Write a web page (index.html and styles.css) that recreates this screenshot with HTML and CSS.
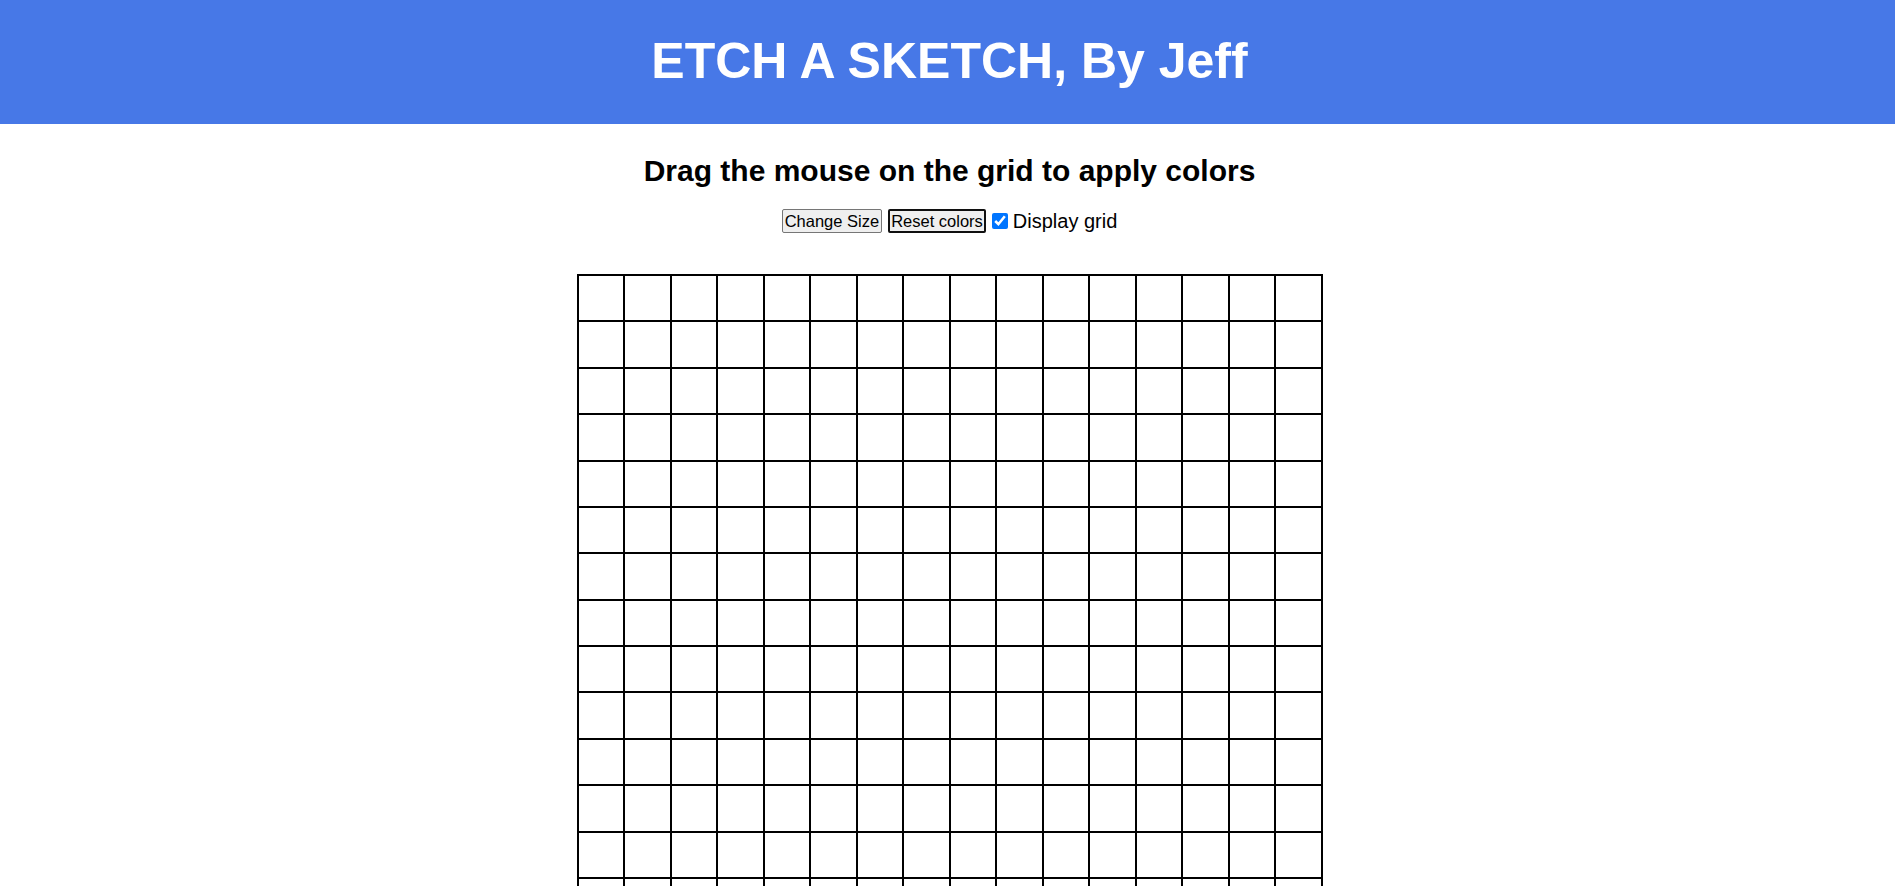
FILE: index.html
```html
<!DOCTYPE html>
<html lang="en">
<head>
<meta charset="utf-8">
<title>Etch a Sketch</title>
<link rel="stylesheet" href="styles.css">
</head>
<body>
<header class="top">
  <h1 class="title">ETCH A SKETCH, By Jeff</h1>
</header>
<main class="main">
  <h2 class="hint">Drag the mouse on the grid to apply colors</h2>
  <div class="controls">
    <button class="btn">Change Size</button>
    <button class="btn btn-focus">Reset colors</button>
    <label class="toggle"><input class="check" type="checkbox" checked> Display grid</label>
  </div>
  <div class="grid">
    <div class="cell"></div><div class="cell"></div><div class="cell"></div><div class="cell"></div><div class="cell"></div><div class="cell"></div><div class="cell"></div><div class="cell"></div><div class="cell"></div><div class="cell"></div><div class="cell"></div><div class="cell"></div><div class="cell"></div><div class="cell"></div><div class="cell"></div><div class="cell"></div>
    <div class="cell"></div><div class="cell"></div><div class="cell"></div><div class="cell"></div><div class="cell"></div><div class="cell"></div><div class="cell"></div><div class="cell"></div><div class="cell"></div><div class="cell"></div><div class="cell"></div><div class="cell"></div><div class="cell"></div><div class="cell"></div><div class="cell"></div><div class="cell"></div>
    <div class="cell"></div><div class="cell"></div><div class="cell"></div><div class="cell"></div><div class="cell"></div><div class="cell"></div><div class="cell"></div><div class="cell"></div><div class="cell"></div><div class="cell"></div><div class="cell"></div><div class="cell"></div><div class="cell"></div><div class="cell"></div><div class="cell"></div><div class="cell"></div>
    <div class="cell"></div><div class="cell"></div><div class="cell"></div><div class="cell"></div><div class="cell"></div><div class="cell"></div><div class="cell"></div><div class="cell"></div><div class="cell"></div><div class="cell"></div><div class="cell"></div><div class="cell"></div><div class="cell"></div><div class="cell"></div><div class="cell"></div><div class="cell"></div>
    <div class="cell"></div><div class="cell"></div><div class="cell"></div><div class="cell"></div><div class="cell"></div><div class="cell"></div><div class="cell"></div><div class="cell"></div><div class="cell"></div><div class="cell"></div><div class="cell"></div><div class="cell"></div><div class="cell"></div><div class="cell"></div><div class="cell"></div><div class="cell"></div>
    <div class="cell"></div><div class="cell"></div><div class="cell"></div><div class="cell"></div><div class="cell"></div><div class="cell"></div><div class="cell"></div><div class="cell"></div><div class="cell"></div><div class="cell"></div><div class="cell"></div><div class="cell"></div><div class="cell"></div><div class="cell"></div><div class="cell"></div><div class="cell"></div>
    <div class="cell"></div><div class="cell"></div><div class="cell"></div><div class="cell"></div><div class="cell"></div><div class="cell"></div><div class="cell"></div><div class="cell"></div><div class="cell"></div><div class="cell"></div><div class="cell"></div><div class="cell"></div><div class="cell"></div><div class="cell"></div><div class="cell"></div><div class="cell"></div>
    <div class="cell"></div><div class="cell"></div><div class="cell"></div><div class="cell"></div><div class="cell"></div><div class="cell"></div><div class="cell"></div><div class="cell"></div><div class="cell"></div><div class="cell"></div><div class="cell"></div><div class="cell"></div><div class="cell"></div><div class="cell"></div><div class="cell"></div><div class="cell"></div>
    <div class="cell"></div><div class="cell"></div><div class="cell"></div><div class="cell"></div><div class="cell"></div><div class="cell"></div><div class="cell"></div><div class="cell"></div><div class="cell"></div><div class="cell"></div><div class="cell"></div><div class="cell"></div><div class="cell"></div><div class="cell"></div><div class="cell"></div><div class="cell"></div>
    <div class="cell"></div><div class="cell"></div><div class="cell"></div><div class="cell"></div><div class="cell"></div><div class="cell"></div><div class="cell"></div><div class="cell"></div><div class="cell"></div><div class="cell"></div><div class="cell"></div><div class="cell"></div><div class="cell"></div><div class="cell"></div><div class="cell"></div><div class="cell"></div>
    <div class="cell"></div><div class="cell"></div><div class="cell"></div><div class="cell"></div><div class="cell"></div><div class="cell"></div><div class="cell"></div><div class="cell"></div><div class="cell"></div><div class="cell"></div><div class="cell"></div><div class="cell"></div><div class="cell"></div><div class="cell"></div><div class="cell"></div><div class="cell"></div>
    <div class="cell"></div><div class="cell"></div><div class="cell"></div><div class="cell"></div><div class="cell"></div><div class="cell"></div><div class="cell"></div><div class="cell"></div><div class="cell"></div><div class="cell"></div><div class="cell"></div><div class="cell"></div><div class="cell"></div><div class="cell"></div><div class="cell"></div><div class="cell"></div>
    <div class="cell"></div><div class="cell"></div><div class="cell"></div><div class="cell"></div><div class="cell"></div><div class="cell"></div><div class="cell"></div><div class="cell"></div><div class="cell"></div><div class="cell"></div><div class="cell"></div><div class="cell"></div><div class="cell"></div><div class="cell"></div><div class="cell"></div><div class="cell"></div>
    <div class="cell"></div><div class="cell"></div><div class="cell"></div><div class="cell"></div><div class="cell"></div><div class="cell"></div><div class="cell"></div><div class="cell"></div><div class="cell"></div><div class="cell"></div><div class="cell"></div><div class="cell"></div><div class="cell"></div><div class="cell"></div><div class="cell"></div><div class="cell"></div>
    <div class="cell"></div><div class="cell"></div><div class="cell"></div><div class="cell"></div><div class="cell"></div><div class="cell"></div><div class="cell"></div><div class="cell"></div><div class="cell"></div><div class="cell"></div><div class="cell"></div><div class="cell"></div><div class="cell"></div><div class="cell"></div><div class="cell"></div><div class="cell"></div>
    <div class="cell"></div><div class="cell"></div><div class="cell"></div><div class="cell"></div><div class="cell"></div><div class="cell"></div><div class="cell"></div><div class="cell"></div><div class="cell"></div><div class="cell"></div><div class="cell"></div><div class="cell"></div><div class="cell"></div><div class="cell"></div><div class="cell"></div><div class="cell"></div>
  </div>
</main>
</body>
</html>
```
FILE: styles.css
```css
html, body {
  margin: 0;
  padding: 0;
  background: #ffffff;
}

body {
  font-family: "Liberation Sans", Arial, sans-serif;
  color: #000000;
  overflow: hidden;
}

.top {
  height: 124px;
  background: #4778e7;
  display: flex;
  align-items: center;
  justify-content: center;
  padding-left: 4px;
}

.title {
  margin: 0;
  color: #ffffff;
  font-size: 50px;
  font-weight: 700;
  line-height: 1.15;
}

.main {
  display: flex;
  flex-direction: column;
  align-items: center;
  padding-left: 4px;
}

.hint {
  margin: 29px 0 0;
  font-size: 30px;
  font-weight: 700;
  line-height: 35px;
}

.controls {
  margin-top: 21px;
  display: flex;
  align-items: center;
  gap: 6px;
  height: 24px;
}

.btn {
  box-sizing: border-box;
  height: 24px;
  padding: 0 2px;
  font-family: "Liberation Sans", Arial, sans-serif;
  font-size: 16.5px;
  color: #000000;
  background: #efefef;
  border: 1px solid #767676;
  border-radius: 2px;
}

.btn-focus {
  border: 2px solid #101010;
  padding: 0 1px;
}

.toggle {
  display: flex;
  align-items: center;
  gap: 5px;
  font-size: 20px;
  line-height: 24px;
}

.check {
  margin: 0;
  width: 16px;
  height: 16px;
  accent-color: #0075ff;
}

.grid {
  margin-top: 41px;
  width: 744px;
  border: 1px solid #000000;
  display: grid;
  grid-template-columns: repeat(16, 1fr);
}

.cell {
  border: 1px solid #000000;
  height: 44.38px;
}
```
